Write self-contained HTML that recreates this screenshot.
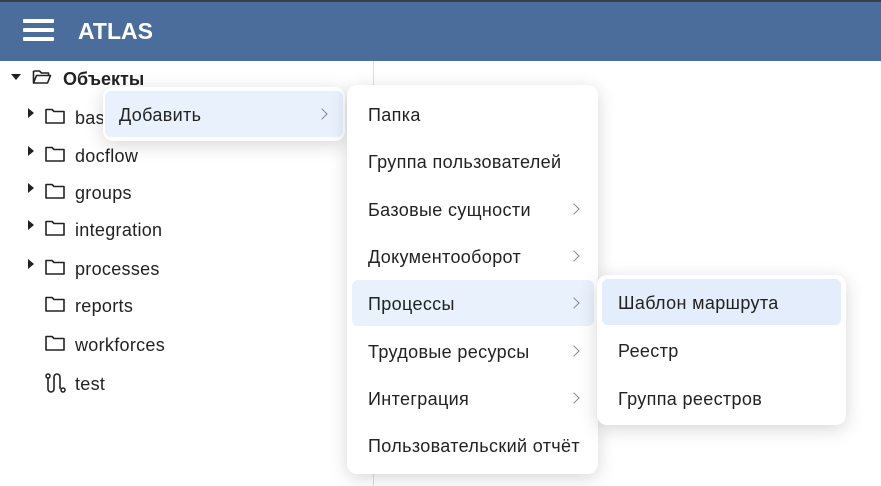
<!DOCTYPE html>
<html><head><meta charset="utf-8"><style>
*{margin:0;padding:0;box-sizing:border-box}
body{width:881px;height:486px;overflow:hidden;background:#fff;font-family:"Liberation Sans","DejaVu Sans",sans-serif;color:#222;position:relative}
.hdr{position:absolute;left:0;top:0;width:881px;height:61px;background:#4a6d9b;border-top:2px solid #3b3f45}
.hb{position:absolute;left:23px;width:31px;height:4px;background:#fff;border-radius:1px}
.logo{position:absolute;left:78px;top:16px;color:#fff;font-weight:bold;font-size:23px}
.vl{position:absolute;left:373px;top:61px;width:1px;height:425px;background:#ddd}
.t{position:absolute;font-size:18px;letter-spacing:.3px;color:#222;line-height:20px}
.tri{position:absolute;width:0;height:0;border-top:5px solid transparent;border-bottom:5px solid transparent;border-left:6px solid #222}
.fd{position:absolute;width:20px;height:16px}
.menu{position:absolute;background:#fff;border-radius:10px;box-shadow:0 4px 18px rgba(0,0,0,.16)}
.mi{position:absolute;font-size:18px;letter-spacing:.35px;line-height:20px;color:#222}
.hl{position:absolute;background:#e9f1fc;border-radius:6px}
.ch{position:absolute;width:8px;height:8px;border-right:1.6px solid #888;border-top:1.6px solid #888;transform:rotate(45deg)}
</style></head><body>
<div class="hdr">
<div class="hb" style="top:17px"></div><div class="hb" style="top:26px"></div><div class="hb" style="top:35px"></div>
<div class="logo">ATLAS</div>
</div>
<div class="vl"></div>

<div style="position:absolute;left:11px;top:74px;width:0;height:0;border-left:5px solid transparent;border-right:5px solid transparent;border-top:6px solid #222"></div>
<svg class="fd" style="left:32px;top:69px" viewBox="0 0 20 16"><path d="M1.5 2h6l2 2h7v2.5M1.5 2v12h14l3-7.5h-14l-3 7.5" fill="none" stroke="#222" stroke-width="1.6" stroke-linejoin="round"/></svg>
<div class="t" style="left:63px;top:69px;font-weight:bold;letter-spacing:0">Объекты</div>

<div class="tri" style="left:28px;top:108px"></div><svg class="fd" style="left:45px;top:108px" viewBox="0 0 20 16"><path d="M1 1.5h6l2 2h10v11.5h-18z" fill="none" stroke="#222" stroke-width="1.6" stroke-linejoin="round"/></svg><div class="t" style="left:75px;top:108px">bas</div>
<div class="tri" style="left:28px;top:146px"></div><svg class="fd" style="left:45px;top:146px" viewBox="0 0 20 16"><path d="M1 1.5h6l2 2h10v11.5h-18z" fill="none" stroke="#222" stroke-width="1.6" stroke-linejoin="round"/></svg><div class="t" style="left:75px;top:146px">docflow</div>
<div class="tri" style="left:28px;top:183px"></div><svg class="fd" style="left:45px;top:183px" viewBox="0 0 20 16"><path d="M1 1.5h6l2 2h10v11.5h-18z" fill="none" stroke="#222" stroke-width="1.6" stroke-linejoin="round"/></svg><div class="t" style="left:75px;top:183px">groups</div>
<div class="tri" style="left:28px;top:220px"></div><svg class="fd" style="left:45px;top:220px" viewBox="0 0 20 16"><path d="M1 1.5h6l2 2h10v11.5h-18z" fill="none" stroke="#222" stroke-width="1.6" stroke-linejoin="round"/></svg><div class="t" style="left:75px;top:220px">integration</div>
<div class="tri" style="left:28px;top:259px"></div><svg class="fd" style="left:45px;top:259px" viewBox="0 0 20 16"><path d="M1 1.5h6l2 2h10v11.5h-18z" fill="none" stroke="#222" stroke-width="1.6" stroke-linejoin="round"/></svg><div class="t" style="left:75px;top:259px">processes</div>
<svg class="fd" style="left:45px;top:296px" viewBox="0 0 20 16"><path d="M1 1.5h6l2 2h10v11.5h-18z" fill="none" stroke="#222" stroke-width="1.6" stroke-linejoin="round"/></svg><div class="t" style="left:75px;top:296px">reports</div>
<svg class="fd" style="left:45px;top:335px" viewBox="0 0 20 16"><path d="M1 1.5h6l2 2h10v11.5h-18z" fill="none" stroke="#222" stroke-width="1.6" stroke-linejoin="round"/></svg><div class="t" style="left:75px;top:335px">workforces</div>
<svg style="position:absolute;left:45px;top:372px" width="22" height="22" viewBox="0 0 22 22"><circle cx="3" cy="4" r="2" fill="none" stroke="#222" stroke-width="1.5"/><circle cx="18" cy="18" r="2" fill="none" stroke="#222" stroke-width="1.5"/><path d="M3 6v11a3 3 0 0 0 6 0v-12a3 3 0 0 1 6 0v11h1" fill="none" stroke="#222" stroke-width="1.6"/></svg>
<div class="t" style="left:75px;top:374px">test</div>

<div class="menu" style="left:103px;top:87px;width:242px;height:54px">
<div class="hl" style="left:2px;top:4px;width:238px;height:46px"></div>
<div class="mi" style="left:16px;top:18px">Добавить</div>
<div class="ch" style="left:215px;top:23px"></div>
</div>

<div class="menu" style="left:347px;top:85px;width:251px;height:389px">
<div class="mi" style="left:21px;top:20px">Папка</div>
<div class="mi" style="left:21px;top:67px">Группа пользователей</div>
<div class="mi" style="left:21px;top:115px">Базовые сущности</div><div class="ch" style="left:223px;top:120px"></div>
<div class="mi" style="left:21px;top:162px">Документооборот</div><div class="ch" style="left:223px;top:167px"></div>
<div class="hl" style="left:5px;top:195px;width:242px;height:46px"></div>
<div class="mi" style="left:21px;top:209px">Процессы</div><div class="ch" style="left:223px;top:214px"></div>
<div class="mi" style="left:21px;top:257px">Трудовые ресурсы</div><div class="ch" style="left:223px;top:262px"></div>
<div class="mi" style="left:21px;top:304px">Интеграция</div><div class="ch" style="left:223px;top:309px"></div>
<div class="mi" style="left:21px;top:351px">Пользовательский отчёт</div>
</div>

<div class="menu" style="left:597px;top:275px;width:249px;height:150px">
<div class="hl" style="left:5px;top:4px;width:239px;height:46px;background:#e3edfb"></div>
<div class="mi" style="left:21px;top:18px">Шаблон маршрута</div>
<div class="mi" style="left:21px;top:66px">Реестр</div>
<div class="mi" style="left:21px;top:114px">Группа реестров</div>
</div>
</body></html>
